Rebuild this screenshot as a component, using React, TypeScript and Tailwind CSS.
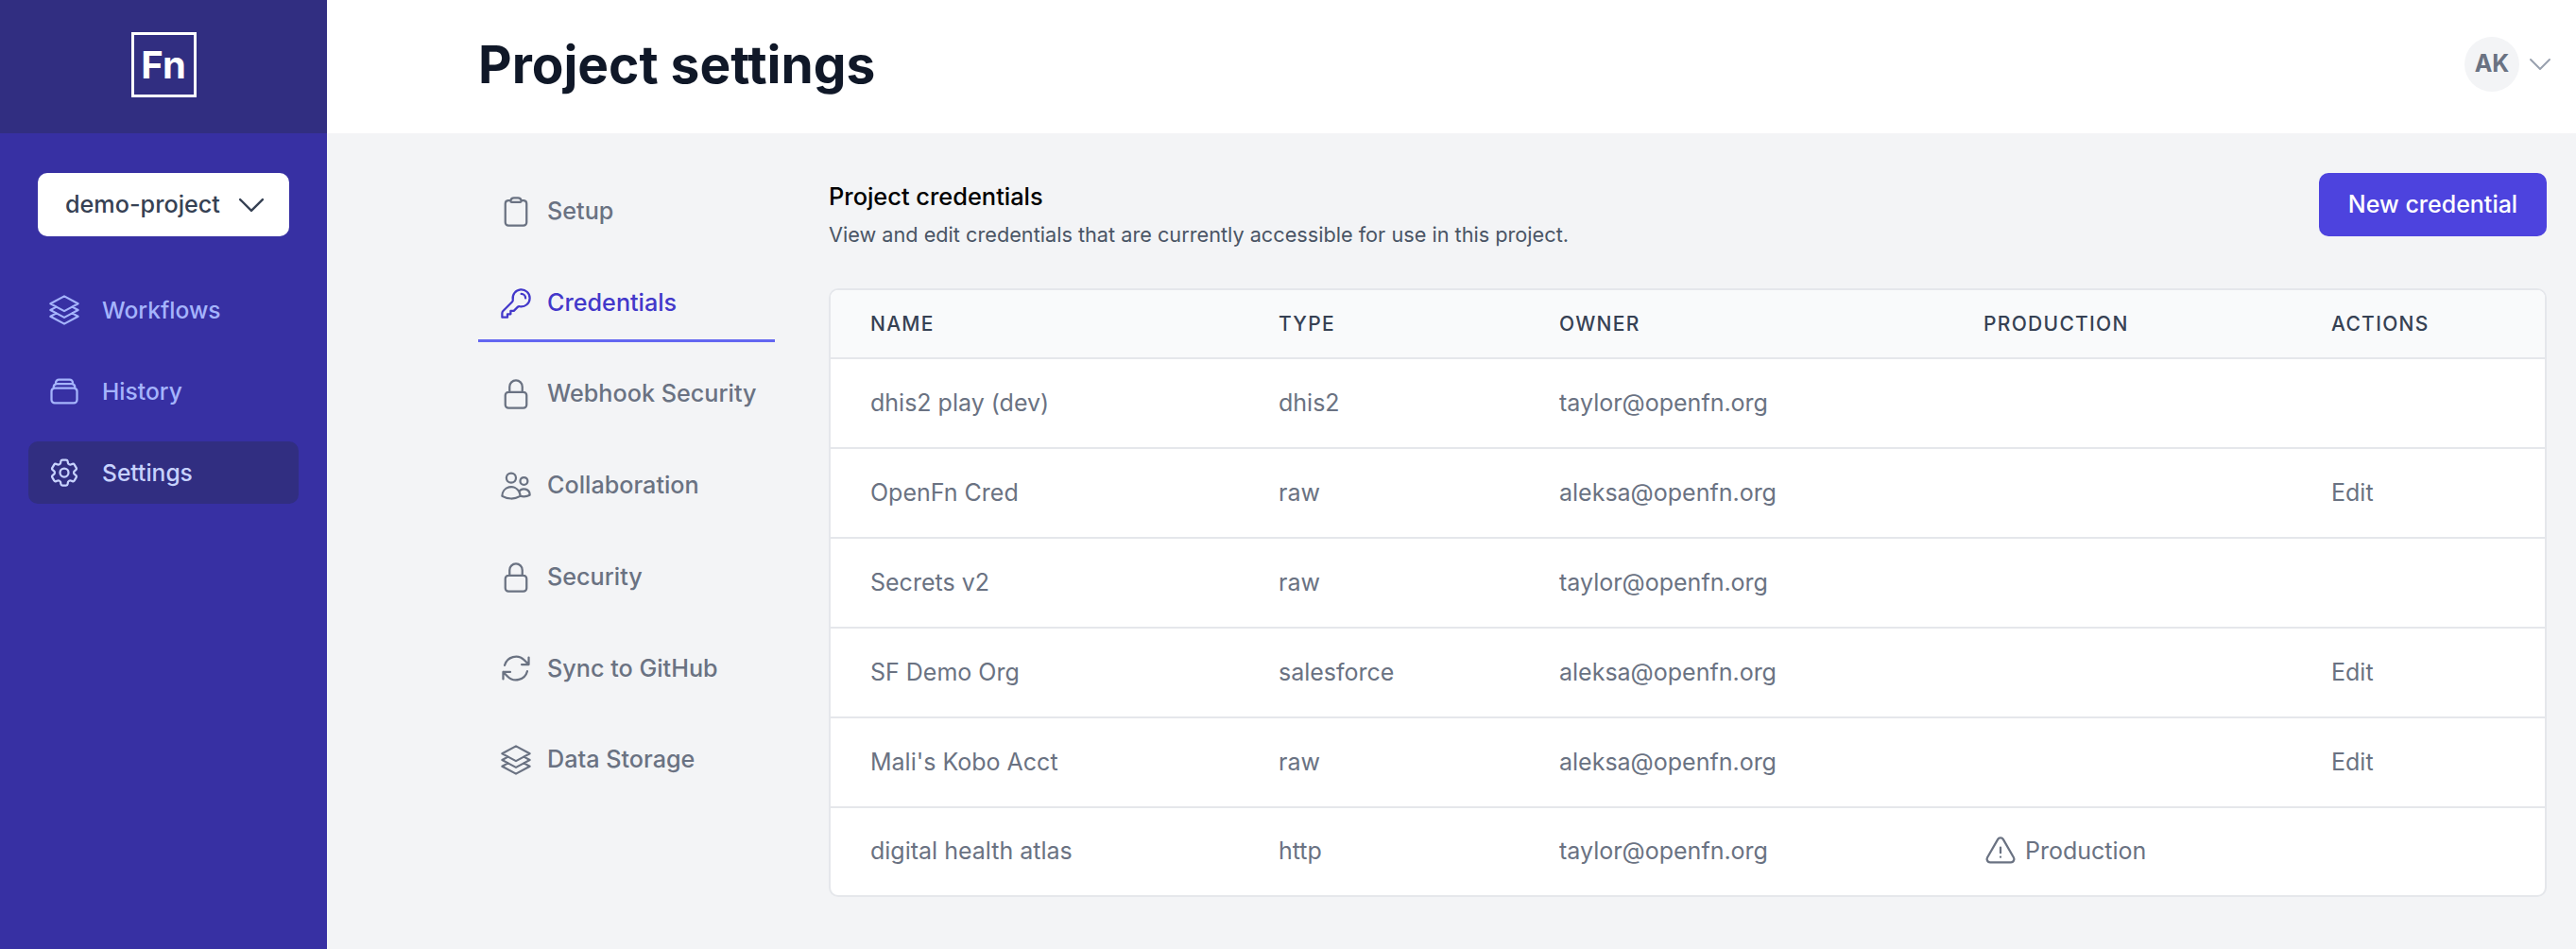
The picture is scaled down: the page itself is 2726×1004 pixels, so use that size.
import {
  HiOutlineArrowPath,
  HiOutlineChevronDown,
  HiOutlineClipboard,
  HiOutlineCog6Tooth,
  HiOutlineExclamationTriangle,
  HiOutlineKey,
  HiOutlineLockClosed,
  HiOutlineRectangleStack,
  HiOutlineSquare3Stack3D,
  HiOutlineUsers,
} from "react-icons/hi2";

const settingsNav = [
  { label: "Setup", icon: HiOutlineClipboard },
  { label: "Credentials", icon: HiOutlineKey, active: true },
  { label: "Webhook Security", icon: HiOutlineLockClosed },
  { label: "Collaboration", icon: HiOutlineUsers },
  { label: "Security", icon: HiOutlineLockClosed },
  { label: "Sync to GitHub", icon: HiOutlineArrowPath },
  { label: "Data Storage", icon: HiOutlineSquare3Stack3D },
];

const credentials = [
  { name: "dhis2 play (dev)", type: "dhis2", owner: "taylor@openfn.org" },
  { name: "OpenFn Cred", type: "raw", owner: "aleksa@openfn.org", edit: true },
  { name: "Secrets v2", type: "raw", owner: "taylor@openfn.org" },
  { name: "SF Demo Org", type: "salesforce", owner: "aleksa@openfn.org", edit: true },
  { name: "Mali's Kobo Acct", type: "raw", owner: "aleksa@openfn.org", edit: true },
  { name: "digital health atlas", type: "http", owner: "taylor@openfn.org", production: true },
];

const headers = ["Name", "Type", "Owner", "Production", "Actions"];
const rowClass = "grid grid-cols-[432px_297px_449px_368px_1fr] items-center pl-[42px]";

function Sidebar() {
  return (
    <aside className="flex w-[346px] shrink-0 flex-col bg-[#3730a3]">
      <div className="flex h-[141px] items-center justify-center bg-[#312e81] pb-[4px]">
        <div className="flex h-[69px] w-[69px] items-center justify-center border-[3px] border-white text-[40px] font-bold leading-none text-white">
          Fn
        </div>
      </div>
      <div className="flex justify-center pt-[42px]">
        <button className="flex h-[67px] w-[266px] items-center gap-[14px] rounded-[10px] bg-white pl-[29px] text-[25.2px] font-medium text-gray-700">
          demo-project
          <HiOutlineChevronDown className="h-[38px] w-[38px]" />
        </button>
      </div>
      <nav className="flex flex-col gap-[20px] px-[30px] pt-[45px]">
        <a className="flex h-[66px] items-center gap-[22px] px-[20px] text-[24.6px] font-medium text-[#a5b4fc]">
          <HiOutlineSquare3Stack3D className="h-[36px] w-[36px]" />
          Workflows
        </a>
        <a className="flex h-[66px] items-center gap-[22px] px-[20px] text-[24.6px] font-medium text-[#a5b4fc]">
          <HiOutlineRectangleStack className="h-[36px] w-[36px]" />
          History
        </a>
        <a className="flex h-[66px] items-center gap-[22px] rounded-[10px] bg-[#312e81] px-[20px] text-[24.6px] font-medium text-[#c7d2fe]">
          <HiOutlineCog6Tooth className="h-[36px] w-[36px]" />
          Settings
        </a>
      </nav>
    </aside>
  );
}

function SettingsNav() {
  return (
    <nav className="flex w-[314px] shrink-0 flex-col gap-[14.7px] pt-[42px]">
      {settingsNav.map((item) => {
        const Icon = item.icon;
        return (
          <a
            key={item.label}
            className={
              item.active
                ? "flex h-[82px] items-center gap-[15px] whitespace-nowrap border-b-[3px] border-[#6366f1] pl-[22px] pt-[3px] text-[25.2px] font-medium text-[#4338ca]"
                : "flex h-[82px] items-center gap-[15px] whitespace-nowrap border-b-[3px] border-transparent pl-[22px] pt-[3px] text-[25.2px] font-medium text-gray-500"
            }
          >
            <Icon className="h-[36px] w-[36px] shrink-0" />
            {item.label}
          </a>
        );
      })}
    </nav>
  );
}

function CredentialsTable() {
  return (
    <div className="overflow-hidden rounded-[10px] border-2 border-gray-200 bg-white">
      <div className={`${rowClass} h-[73px] border-b-2 border-gray-200 bg-gray-50`}>
        {headers.map((h) => (
          <div key={h} className="text-[21px] font-medium uppercase tracking-[1.3px] text-gray-700">
            {h}
          </div>
        ))}
      </div>
      {credentials.map((c, i) => (
        <div
          key={c.name}
          className={
            i < credentials.length - 1
              ? `${rowClass} h-[95px] border-b-2 border-gray-200 text-[25px] text-gray-500`
              : `${rowClass} h-[92px] text-[25px] text-gray-500`
          }
        >
          <div>{c.name}</div>
          <div>{c.type}</div>
          <div>{c.owner}</div>
          <div>
            {c.production && (
              <span className="flex items-center gap-[8px]">
                <HiOutlineExclamationTriangle className="h-[36px] w-[36px]" />
                Production
              </span>
            )}
          </div>
          <div>{c.edit && "Edit"}</div>
        </div>
      ))}
    </div>
  );
}

export default function App() {
  return (
    <div className="flex h-[1004px] w-[2726px] overflow-hidden bg-gray-100 font-['Inter',sans-serif] antialiased">
      <Sidebar />
      <div className="flex min-w-0 flex-1 flex-col">
        <header className="flex h-[141px] shrink-0 items-center justify-between bg-white pb-[5px] pl-[160px] pr-[22px]">
          <h1 className="text-[55px] font-bold leading-none text-gray-900">Project settings</h1>
          <div className="flex items-center gap-[6px]">
            <div className="flex h-[58px] w-[58px] items-center justify-center rounded-full bg-gray-100 text-[25px] font-bold text-gray-500">
              AK
            </div>
            <HiOutlineChevronDown className="h-[32px] w-[32px] text-gray-400" />
          </div>
        </header>
        <main className="flex flex-1 pl-[160px] pr-[31px]">
          <SettingsNav />
          <section className="ml-[57px] min-w-0 flex-1 pt-[42px]">
            <div className="flex items-start justify-between">
              <div className="pt-[5px]">
                <h2 className="text-[25.4px] font-medium leading-[40px] text-black">Project credentials</h2>
                <p className="mt-[4px] text-[21.7px] leading-[32px] text-gray-600">
                  View and edit credentials that are currently accessible for use in this project.
                </p>
              </div>
              <button className="h-[67px] w-[241px] rounded-[10px] bg-[#4d43de] text-[25px] font-medium text-white">
                New credential
              </button>
            </div>
            <div className="mt-[41px]">
              <CredentialsTable />
            </div>
          </section>
        </main>
      </div>
    </div>
  );
}
